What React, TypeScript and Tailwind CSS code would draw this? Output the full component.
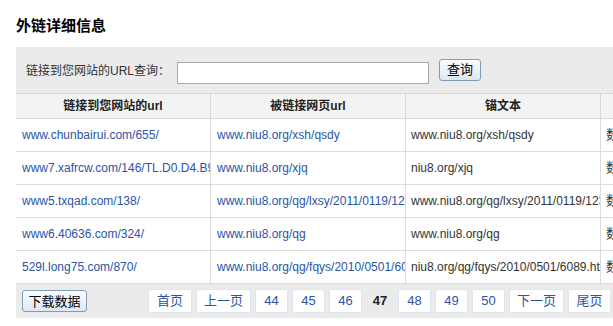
const rows = [
  ['www.chunbairui.com/655/', 'www.niu8.org/xsh/qsdy', 'www.niu8.org/xsh/qsdy'],
  ['www7.xafrcw.com/146/TL.D0.D4.B9.B2.html', 'www.niu8.org/xjq', 'niu8.org/xjq'],
  ['www5.txqad.com/138/', 'www.niu8.org/qg/lxsy/2011/0119/1234.html', 'www.niu8.org/qg/lxsy/2011/0119/1234.html'],
  ['www6.40636.com/324/', 'www.niu8.org/qg', 'www.niu8.org/qg'],
  ['529l.long75.com/870/', 'www.niu8.org/qg/fqys/2010/0501/6089.html', 'niu8.org/qg/fqys/2010/0501/6089.html'],
];

const pages = ['44', '45', '46', '47', '48', '49', '50'];

const latin = "font-['Liberation_Sans','Noto_Sans_CJK_SC',sans-serif]";

export default function App() {
  return (
    <div className={`w-[613px] h-[326px] overflow-hidden bg-white ${latin}`}>
      <h2 className="pl-4 pt-[16px] h-[47px] text-[15px] font-bold text-black leading-[20px]">
        外链详细信息
      </h2>

      <div className="ml-4 w-[797px] bg-[#ebebeb]">
        {/* Search bar */}
        <div className="flex items-center h-[46px] pl-[10px]">
          <span className="text-[12px] text-[#333] w-[151px] mt-[1px] whitespace-nowrap">链接到您网站的URL查询：</span>
          <input
            type="text"
            className="w-[252px] h-[22px] mt-[5px] border border-[#a9a9a9] bg-white outline-none"
          />
          <button className="ml-[10px] -mt-[1px] w-[42px] h-[22px] rounded-[3px] border border-[#7f9db9] bg-gradient-to-b from-[#fbfdff] to-[#dbe7f4] text-[13px] text-black leading-none">
            查询
          </button>
        </div>

        {/* Table */}
        <div className="grid grid-cols-[195px_195px_195px_195px] border-t border-[#d8d8d8]">
          {['链接到您网站的url', '被链接网页url', '锚文本', ''].map((h, i) => (
            <div
              key={i}
              className="h-[24px] flex items-center justify-center bg-[#f3f3f3] border-r border-[#d8d8d8] text-[12px] font-bold text-[#222]"
            >
              {h}
            </div>
          ))}
          {rows.map((r, i) => (
            <div key={i} className="contents">
              <div className="h-[33px] flex items-center pl-[6px] bg-white border-r border-t border-[#dcdcdc] text-[12px] text-[#2a55a5] whitespace-nowrap overflow-hidden">
                {r[0]}
              </div>
              <div className="h-[33px] flex items-center pl-[6px] bg-white border-r border-t border-[#dcdcdc] text-[12px] text-[#2a55a5] whitespace-nowrap overflow-hidden">
                {r[1]}
              </div>
              <div className="h-[33px] flex items-center pl-[5px] bg-white border-r border-t border-[#dcdcdc] text-[12px] text-[#333] whitespace-nowrap overflow-hidden">
                {r[2]}
              </div>
              <div className="h-[33px] flex items-center pl-[5px] bg-white border-t border-[#dcdcdc] text-[13px] text-[#333] whitespace-nowrap overflow-hidden">
                数
              </div>
            </div>
          ))}
        </div>

        {/* Footer */}
        <div className="flex items-center h-[35px] pl-[6px] border-t border-[#dcdcdc]">
          <button className="w-[65px] h-[22px] rounded-[3px] border border-[#7f9db9] bg-gradient-to-b from-[#fbfdff] to-[#dbe7f4] text-[13px] text-black leading-none">
            下载数据
          </button>
          <div className="flex items-center gap-[4px] ml-[61px] text-[13px]">
            <span className="w-[44px] h-[24px] flex items-center justify-center bg-white border border-[#dfe5ee] text-[#2a55a5]">首页</span>
            <span className="w-[55px] h-[24px] flex items-center justify-center bg-white border border-[#dfe5ee] text-[#2a55a5]">上一页</span>
            {pages.map((p) =>
              p === '47' ? (
                <span key={p} className="w-[28px] h-[24px] flex items-center justify-center font-bold text-[#222]">
                  {p}
                </span>
              ) : (
                <span key={p} className="w-[33px] h-[24px] flex items-center justify-center bg-white border border-[#dfe5ee] text-[#2a55a5]">
                  {p}
                </span>
              )
            )}
            <span className="w-[55px] h-[24px] flex items-center justify-center bg-white border border-[#dfe5ee] text-[#2a55a5]">下一页</span>
            <span className="w-[43px] h-[24px] flex items-center justify-center bg-white border border-[#dfe5ee] text-[#2a55a5]">尾页</span>
            <span className="text-[#333] whitespace-nowrap">共</span>
          </div>
        </div>
      </div>
    </div>
  );
}
